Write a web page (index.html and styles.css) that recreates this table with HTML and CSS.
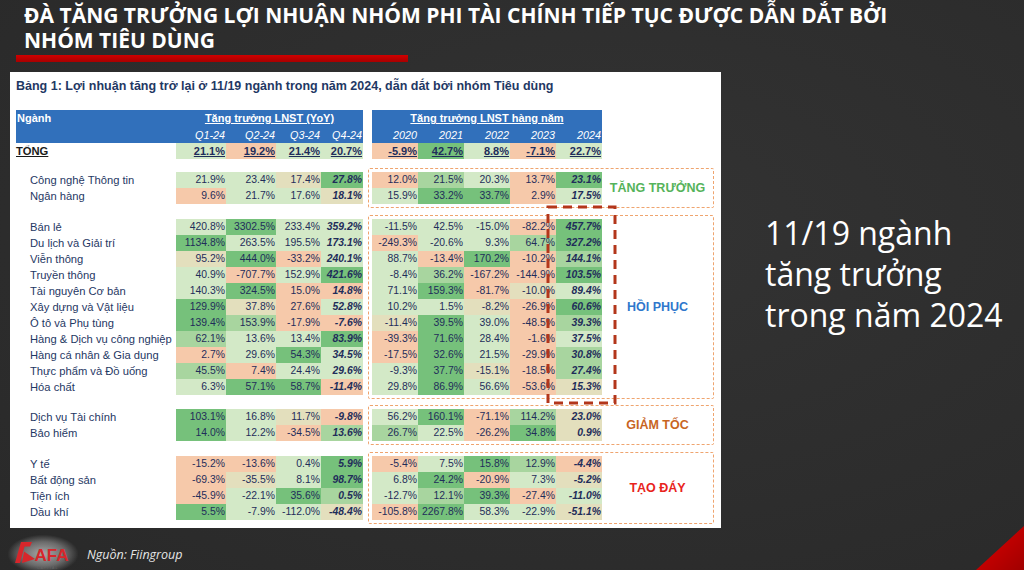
FILE: index.html
```html
<!DOCTYPE html>
<html lang="vi">
<head>
<meta charset="utf-8">
<title>Đà tăng trưởng lợi nhuận</title>
<link rel="stylesheet" href="styles.css">
</head>
<body>
<div class="slide">
  <header class="title">
    <h1>ĐÀ TĂNG TRƯỞNG LỢI NHUẬN NHÓM PHI TÀI CHÍNH TIẾP TỤC ĐƯỢC DẪN DẮT BỞI<br>NHÓM TIÊU DÙNG</h1>
    <div class="redbar"></div>
  </header>

  <main class="main">
    <section class="panel">
      <div class="caption">Bảng 1: Lợi nhuận tăng trở lại ở 11/19 ngành trong năm 2024, dẫn dắt bởi nhóm Tiêu dùng</div>

      <div class="thead">
        <div class="hl">
          <div class="hrow1"><span class="hn">Ngành</span><span class="ht">Tăng trưởng LNST (YoY)</span></div>
          <div class="hrow2 lcols"><span></span><span>Q1-24</span><span>Q2-24</span><span>Q3-24</span><span>Q4-24</span></div>
        </div>
        <div class="hr">
          <div class="hrow1 single"><span class="ht">Tăng trưởng LNST hàng năm</span></div>
          <div class="hrow2 rcols"><span>2020</span><span>2021</span><span>2022</span><span>2023</span><span>2024</span></div>
        </div>
      </div>

      <div class="total">
        <div class="row lcols"><span class="lab tl">TỔNG</span><span class="c g1">21.1%</span><span class="c o">19.2%</span><span class="c g1">21.4%</span><span class="c g1">20.7%</span></div>
        <div class="row rcols"><span class="c o">-5.9%</span><span class="c g3">42.7%</span><span class="c g1">8.8%</span><span class="c o">-7.1%</span><span class="c g1">22.7%</span></div>
      </div>

      <div class="sec sec1">
        <div class="lhs">
          <div class="row lcols"><span class="lab">Công nghệ Thông tin</span><span class="c g1">21.9%</span><span class="c g1">23.4%</span><span class="c y">17.4%</span><span class="c b g3">27.8%</span></div>
          <div class="row lcols"><span class="lab">Ngân hàng</span><span class="c o">9.6%</span><span class="c g1">21.7%</span><span class="c g1">17.6%</span><span class="c b y">18.1%</span></div>
        </div>
        <div class="box">
          <div class="rhs">
            <div class="row rcols"><span class="c o">12.0%</span><span class="c g2">21.5%</span><span class="c g1">20.3%</span><span class="c o">13.7%</span><span class="c b g3">23.1%</span></div>
            <div class="row rcols"><span class="c g1">15.9%</span><span class="c g3">33.2%</span><span class="c g3">33.7%</span><span class="c o">2.9%</span><span class="c b g1">17.5%</span></div>
          </div>
          <div class="tag t-green">TĂNG TRƯỞNG</div>
        </div>
      </div>

      <div class="sec sec2">
        <div class="lhs">
          <div class="row lcols"><span class="lab">Bán lẻ</span><span class="c g1">420.8%</span><span class="c g3">3302.5%</span><span class="c g1">233.4%</span><span class="c b g1">359.2%</span></div>
          <div class="row lcols"><span class="lab">Du lịch và Giải trí</span><span class="c g3">1134.8%</span><span class="c g1">263.5%</span><span class="c g1">195.5%</span><span class="c b g1">173.1%</span></div>
          <div class="row lcols"><span class="lab">Viễn thông</span><span class="c y">95.2%</span><span class="c g3">444.0%</span><span class="c o">-33.2%</span><span class="c b g1">240.1%</span></div>
          <div class="row lcols"><span class="lab">Truyền thông</span><span class="c g1">40.9%</span><span class="c o">-707.7%</span><span class="c g1">152.9%</span><span class="c b g3">421.6%</span></div>
          <div class="row lcols"><span class="lab">Tài nguyên Cơ bản</span><span class="c g1">140.3%</span><span class="c g3">324.5%</span><span class="c o">15.0%</span><span class="c b o">14.8%</span></div>
          <div class="row lcols"><span class="lab">Xây dựng và Vật liệu</span><span class="c g3">129.9%</span><span class="c y">37.8%</span><span class="c o">27.6%</span><span class="c b g1">52.8%</span></div>
          <div class="row lcols"><span class="lab">Ô tô và Phụ tùng</span><span class="c g3">139.4%</span><span class="c g2">153.9%</span><span class="c o">-17.9%</span><span class="c b o">-7.6%</span></div>
          <div class="row lcols"><span class="lab">Hàng &amp; Dịch vụ công nghiệp</span><span class="c g2">62.1%</span><span class="c g1">13.6%</span><span class="c g1">13.4%</span><span class="c b g3">83.9%</span></div>
          <div class="row lcols"><span class="lab">Hàng cá nhân &amp; Gia dụng</span><span class="c o">2.7%</span><span class="c g1">29.6%</span><span class="c g3">54.3%</span><span class="c b g1">34.5%</span></div>
          <div class="row lcols"><span class="lab">Thực phẩm và Đồ uống</span><span class="c g2">45.5%</span><span class="c o">7.4%</span><span class="c g1">24.4%</span><span class="c b g1">29.6%</span></div>
          <div class="row lcols"><span class="lab">Hóa chất</span><span class="c g1">6.3%</span><span class="c g3">57.1%</span><span class="c g3">58.7%</span><span class="c b o">-11.4%</span></div>
        </div>
        <div class="box">
          <div class="rhs">
            <div class="row rcols"><span class="c g1">-11.5%</span><span class="c g1">42.5%</span><span class="c g1">-15.0%</span><span class="c o">-82.2%</span><span class="c b g3">457.7%</span></div>
            <div class="row rcols"><span class="c o">-249.3%</span><span class="c g1">-20.6%</span><span class="c g1">9.3%</span><span class="c g2">64.7%</span><span class="c b g3">327.2%</span></div>
            <div class="row rcols"><span class="c g1">88.7%</span><span class="c o">-13.4%</span><span class="c g3">170.2%</span><span class="c o">-10.2%</span><span class="c b g2">144.1%</span></div>
            <div class="row rcols"><span class="c g1">-8.4%</span><span class="c g2">36.2%</span><span class="c o">-167.2%</span><span class="c o">-144.9%</span><span class="c b g3">103.5%</span></div>
            <div class="row rcols"><span class="c g1">71.1%</span><span class="c g3">159.3%</span><span class="c o">-81.7%</span><span class="c y">-10.0%</span><span class="c b g1">89.4%</span></div>
            <div class="row rcols"><span class="c g1">10.2%</span><span class="c g1">1.5%</span><span class="c y">-8.2%</span><span class="c o">-26.9%</span><span class="c b g3">60.6%</span></div>
            <div class="row rcols"><span class="c y">-11.4%</span><span class="c g3">39.5%</span><span class="c g1">39.0%</span><span class="c o">-48.5%</span><span class="c b g2">39.3%</span></div>
            <div class="row rcols"><span class="c o">-39.3%</span><span class="c g3">71.6%</span><span class="c g1">28.4%</span><span class="c o">-1.6%</span><span class="c b g1">37.5%</span></div>
            <div class="row rcols"><span class="c o">-17.5%</span><span class="c g3">32.6%</span><span class="c g1">21.5%</span><span class="c o">-29.9%</span><span class="c b g2">30.8%</span></div>
            <div class="row rcols"><span class="c g1">-9.3%</span><span class="c g3">37.7%</span><span class="c y">-15.1%</span><span class="c o">-18.5%</span><span class="c b g2">27.4%</span></div>
            <div class="row rcols"><span class="c g1">29.8%</span><span class="c g3">86.9%</span><span class="c g1">56.6%</span><span class="c o">-53.6%</span><span class="c b y">15.3%</span></div>
          </div>
          <div class="tag t-blue">HỒI PHỤC</div>
        </div>
      </div>

      <div class="sec sec3">
        <div class="lhs">
          <div class="row lcols"><span class="lab">Dịch vụ Tài chính</span><span class="c g3">103.1%</span><span class="c g1">16.8%</span><span class="c y">11.7%</span><span class="c b o">-9.8%</span></div>
          <div class="row lcols"><span class="lab">Bảo hiểm</span><span class="c g3">14.0%</span><span class="c g1">12.2%</span><span class="c o">-34.5%</span><span class="c b g2">13.6%</span></div>
        </div>
        <div class="box">
          <div class="rhs">
            <div class="row rcols"><span class="c g1">56.2%</span><span class="c g3">160.1%</span><span class="c o">-71.1%</span><span class="c g2">114.2%</span><span class="c b y">23.0%</span></div>
            <div class="row rcols"><span class="c g2">26.7%</span><span class="c g1">22.5%</span><span class="c o">-26.2%</span><span class="c g3">34.8%</span><span class="c b y">0.9%</span></div>
          </div>
          <div class="tag t-orange">GIẢM TỐC</div>
        </div>
      </div>

      <div class="sec sec4">
        <div class="lhs">
          <div class="row lcols"><span class="lab">Y tế</span><span class="c o">-15.2%</span><span class="c o">-13.6%</span><span class="c g1">0.4%</span><span class="c b g3">5.9%</span></div>
          <div class="row lcols"><span class="lab">Bất động sản</span><span class="c o">-69.3%</span><span class="c y">-35.5%</span><span class="c g1">8.1%</span><span class="c b g3">98.7%</span></div>
          <div class="row lcols"><span class="lab">Tiện ích</span><span class="c o">-45.9%</span><span class="c g1">-22.1%</span><span class="c g3">35.6%</span><span class="c b g2">0.5%</span></div>
          <div class="row lcols"><span class="lab">Dầu khí</span><span class="c g3">5.5%</span><span class="c g1">-7.9%</span><span class="c g1">-112.0%</span><span class="c b y">-48.4%</span></div>
        </div>
        <div class="box">
          <div class="rhs">
            <div class="row rcols"><span class="c o">-5.4%</span><span class="c g1">7.5%</span><span class="c g3">15.8%</span><span class="c g2">12.9%</span><span class="c b o">-4.4%</span></div>
            <div class="row rcols"><span class="c g1">6.8%</span><span class="c g3">24.2%</span><span class="c o">-20.9%</span><span class="c g1">7.3%</span><span class="c b y">-5.2%</span></div>
            <div class="row rcols"><span class="c g1">-12.7%</span><span class="c g2">12.1%</span><span class="c g3">39.3%</span><span class="c o">-27.4%</span><span class="c b g1">-11.0%</span></div>
            <div class="row rcols"><span class="c o">-105.8%</span><span class="c g3">2267.8%</span><span class="c g1">58.3%</span><span class="c g1">-22.9%</span><span class="c b y">-51.1%</span></div>
          </div>
          <div class="tag t-red">TẠO ĐÁY</div>
        </div>
      </div>

      <svg class="redframe" width="71" height="200" viewBox="0 0 71 200" aria-hidden="true">
        <rect x="2" y="2" width="67" height="196" fill="none" stroke="#b3361b" stroke-width="3" stroke-dasharray="9 6"/>
      </svg>
    </section>

    <aside class="aside">
      <p>11/19 ngành<br>tăng trưởng<br>trong năm 2024</p>
    </aside>
  </main>

  <footer class="footer">
    <div class="logo">
      <svg width="62" height="34" viewBox="0 0 62 34" aria-label="SAFA Capital">
        <polygon points="3,26 9,5 20,5 18,9.5 12.5,9.5 8,26" fill="#d7262b"/>
        <polygon points="12,14.5 23,22 10,26" fill="#d7262b"/>
        <text x="22.5" y="24" class="logo-t">AFA</text>
        <text x="25" y="32" class="logo-s">CAPITAL</text>
      </svg>
    </div>
    <span class="source">Nguồn: Fiingroup</span>
  </footer>

  <div class="corner"></div>
</div>
</body>
</html>
```

FILE: styles.css
```css
* { box-sizing: border-box; }
html, body { margin: 0; padding: 0; }
body { background: #2e2e2e; font-family: "Liberation Sans", Arial, sans-serif; }

.slide {
  position: relative;
  width: 1024px;
  height: 570px;
  overflow: hidden;
  background: radial-gradient(ellipse at 60% 40%, #333333 0%, #2c2c2c 70%, #292929 100%);
}

.title { padding: 3px 0 0 24px; }
.title h1 {
  margin: 0;
  font-family: "Open Sans", "Noto Sans", sans-serif;
  font-weight: 700;
  font-size: 21px;
  line-height: 25px;
  color: #ffffff;
  letter-spacing: 0;
}
.redbar {
  margin: 2px 0 0 -8px;
  width: 392px;
  height: 7px;
  background: linear-gradient(#d00000, #a80000);
}

.main { display: flex; margin-top: 10px; }

.panel {
  position: relative;
  margin-left: 10px;
  width: 711px;
  height: 456px;
  background: #ffffff;
  padding: 6px 7px 0 6px;
  color: #1f3864;
}
.caption {
  font-weight: 700;
  font-size: 12.5px;
  line-height: 16px;
  color: #1f3864;
}

.lcols { display: grid; grid-template-columns: 160px 50px 50px 45px 42px; }
.rcols { display: grid; grid-template-columns: repeat(5, 46px); }

.thead { display: flex; gap: 9px; margin-top: 16px; }
.hl { width: 347px; background: #3170bb; }
.hr { width: 230px; background: #3170bb; }
.hrow1 { height: 17px; display: grid; grid-template-columns: 160px 187px; color: #fff; font-weight: 700; font-size: 11px; line-height: 17px; }
.hrow1.single { grid-template-columns: 230px; }
.hn { padding-left: 1px; }
.ht { text-align: center; text-decoration: underline; }
.hrow2 { height: 16px; color: #fff; font-style: italic; font-size: 10.8px; line-height: 16px; }
.hrow2 span { text-align: right; padding-right: 1px; }

.total { display: flex; gap: 9px; }
.total .row { height: 16px; }
.total .c { font-weight: 700; font-size: 11px; text-decoration: underline; }
.tl { padding-left: 0 !important; font-weight: 700; font-size: 11.5px; text-decoration: underline; color: #1a1a1a !important; }

.row { height: 16px; }
.lab { font-size: 11.2px; line-height: 16px; padding-left: 14px; color: #1f3864; white-space: nowrap; }
.c { font-size: 10.4px; line-height: 16px; text-align: right; padding-right: 1px; color: #1f2d5a; white-space: nowrap; }
.c.b { font-weight: 700; font-style: italic; }

.g3 { background: #76c17b; }
.g2 { background: #a8d59f; }
.g1 { background: #d3e9c7; }
.y  { background: #e3dfbd; }
.o  { background: #f6c9aa; }

.sec { display: flex; }
.lhs { width: 347px; padding-top: 4px; }
.box {
  margin-left: 5px;
  width: 346px;
  border: 1px dashed #efa46e;
  border-radius: 2px;
  padding: 3px 0 3px 3px;
  display: flex;
}
.rhs { width: 230px; }
.tag { flex: 1; display: flex; align-items: center; justify-content: center; font-weight: 700; font-size: 12.5px; }
.t-green { color: #55b35a; }
.t-blue { color: #2f77cc; }
.t-orange { color: #c8651f; }
.t-red { color: #e8231c; }

.sec1 { margin-top: 9px; }
.sec2 { margin-top: 7px; }
.sec3 { margin-top: 6px; }
.sec4 { margin-top: 7px; }

.redframe { position: absolute; left: 536px; top: 133px; }

.aside { padding: 140px 0 0 44px; }
.aside p {
  margin: 0;
  font-family: "Open Sans", "Noto Sans", sans-serif;
  font-size: 32px;
  line-height: 41px;
  color: #ffffff;
}

.footer { height: 42px; display: flex; align-items: center; padding: 10px 0 0 8px; }
.logo {
  width: 70px;
  height: 38px;
  display: flex;
  align-items: center;
  justify-content: center;
  background: radial-gradient(ellipse at center, rgba(255,255,255,0.6) 0%, rgba(255,255,255,0.3) 45%, rgba(255,255,255,0) 72%);
}
.logo-t { font-family: "Liberation Sans", Arial, sans-serif; font-weight: 700; font-size: 17px; fill: #d7262b; }
.logo-s { font-family: "Liberation Sans", Arial, sans-serif; font-size: 3.5px; letter-spacing: 1px; fill: #666; }
.source {
  margin-left: 9px;
  font-family: "Open Sans", "Noto Sans", sans-serif;
  font-style: italic;
  font-size: 12.5px;
  color: #e6e6e6;
}

.corner {
  position: absolute;
  right: 0;
  bottom: 0;
  width: 48px;
  height: 44px;
  background: linear-gradient(135deg, #e00000, #a00000);
  clip-path: polygon(100% 0, 100% 100%, 0 100%);
}
```
